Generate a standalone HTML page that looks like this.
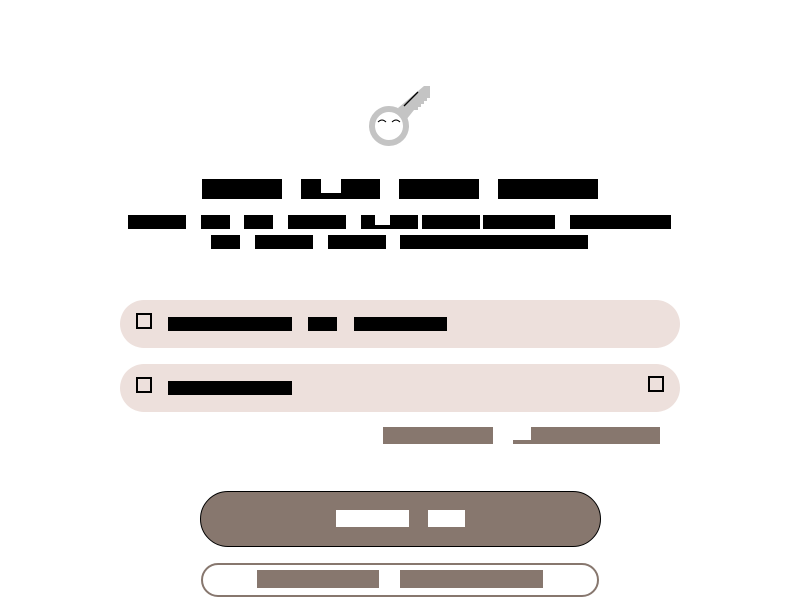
<!DOCTYPE html>
<html><head><meta charset="utf-8"><style>
html,body{margin:0;padding:0;background:#fff;width:800px;height:600px;overflow:hidden;position:relative;font-family:"Liberation Sans",sans-serif}
.w{position:absolute;color:transparent;overflow:hidden;white-space:nowrap;font-size:10px}
.k{background:#000}
.g{background:#87776e}
.wh{background:#fff}
.pill{position:absolute;left:120px;width:560px;height:48px;background:#ede0dc;border-radius:24px}
.cb{position:absolute;width:12px;height:12px;border:2px solid #000;background:#ede0dc}
</style></head><body>
<svg style="position:absolute;left:0;top:0" width="800" height="600">
  <polygon points="398,108 424,86 430,86 430,98 427,98 427,101 424,101 424,104 421,104 421,107 418,107 418,110 414,110 406,120" fill="#c4c4c4"/>
  <circle cx="389" cy="126" r="17" fill="#fff" stroke="#c4c4c4" stroke-width="6"/>
  <line x1="418" y1="92" x2="404" y2="106" stroke="#000" stroke-width="1.3"/>
  <path d="M378 122 q4 -4 8 0 M392 122 q4 -4 8 0" fill="none" stroke="#000" stroke-width="1"/>
</svg>
<!-- title -->
<div class="w k" style="left:202px;top:179px;width:80px;height:20px">Sign</div>
<div class="w k" style="left:301px;top:179px;width:79px;height:20px;background:linear-gradient(#fff 0,#fff 14px,#000 14px) 20px 0/20px 20px no-repeat,#000">i_to</div>
<div class="w k" style="left:399px;top:179px;width:80px;height:20px">your</div>
<div class="w k" style="left:498px;top:179px;width:100px;height:20px">account</div>
<!-- subtitle -->
<div class="w k" style="left:128px;top:215px;width:58px;height:14px">Keep</div>
<div class="w k" style="left:201px;top:215px;width:29px;height:14px">it</div>
<div class="w k" style="left:244px;top:215px;width:29px;height:14px">up</div>
<div class="w k" style="left:288px;top:215px;width:58px;height:14px">with</div>
<div class="w k" style="left:361px;top:215px;width:57px;height:14px;background:linear-gradient(#fff 0,#fff 10px,#000 10px) 14px 0/15px 14px no-repeat,#000">a_te</div>
<div class="w k" style="left:422px;top:215px;width:58px;height:14px">mate</div>
<div class="w k" style="left:483px;top:215px;width:72px;height:14px">sense</div>
<div class="w k" style="left:570px;top:215px;width:101px;height:14px">through</div>
<div class="w k" style="left:211px;top:235px;width:29px;height:14px">of</div>
<div class="w k" style="left:255px;top:235px;width:58px;height:14px">your</div>
<div class="w k" style="left:328px;top:235px;width:58px;height:14px">data</div>
<div class="w k" style="left:400px;top:235px;width:188px;height:14px">synchronization</div>
<!-- pills -->
<div class="pill" style="top:300px"></div>
<div class="cb" style="left:136px;top:313px"></div>
<div class="w k" style="left:168px;top:317px;width:124px;height:14px">Username</div>
<div class="w k" style="left:308px;top:317px;width:29px;height:14px">or</div>
<div class="w k" style="left:354px;top:317px;width:93px;height:14px">email</div>
<div class="pill" style="top:364px"></div>
<div class="cb" style="left:136px;top:377px"></div>
<div class="w k" style="left:168px;top:381px;width:124px;height:14px">Password</div>
<div class="cb" style="left:648px;top:376px"></div>
<!-- link -->
<div class="w g" style="left:383px;top:427px;width:110px;height:17px">Forgot</div>
<div class="w g" style="left:513px;top:427px;width:147px;height:17px;background:linear-gradient(#fff 0,#fff 13px,#87776e 13px) 0 0/18px 17px no-repeat,#87776e">_password</div>
<!-- buttons -->
<div style="position:absolute;left:200px;top:491px;width:399px;height:54px;background:#87776e;border:1px solid #000;border-radius:28px"></div>
<div class="w wh" style="left:336px;top:510px;width:73px;height:17px">Sign</div>
<div class="w wh" style="left:428px;top:510px;width:37px;height:17px">in</div>
<div style="position:absolute;left:201px;top:563px;width:394px;height:30px;background:#fff;border:2px solid #87776e;border-radius:17px"></div>
<div class="w g" style="left:257px;top:570px;width:122px;height:18px">Create</div>
<div class="w g" style="left:400px;top:570px;width:143px;height:18px">account</div>
</body></html>
